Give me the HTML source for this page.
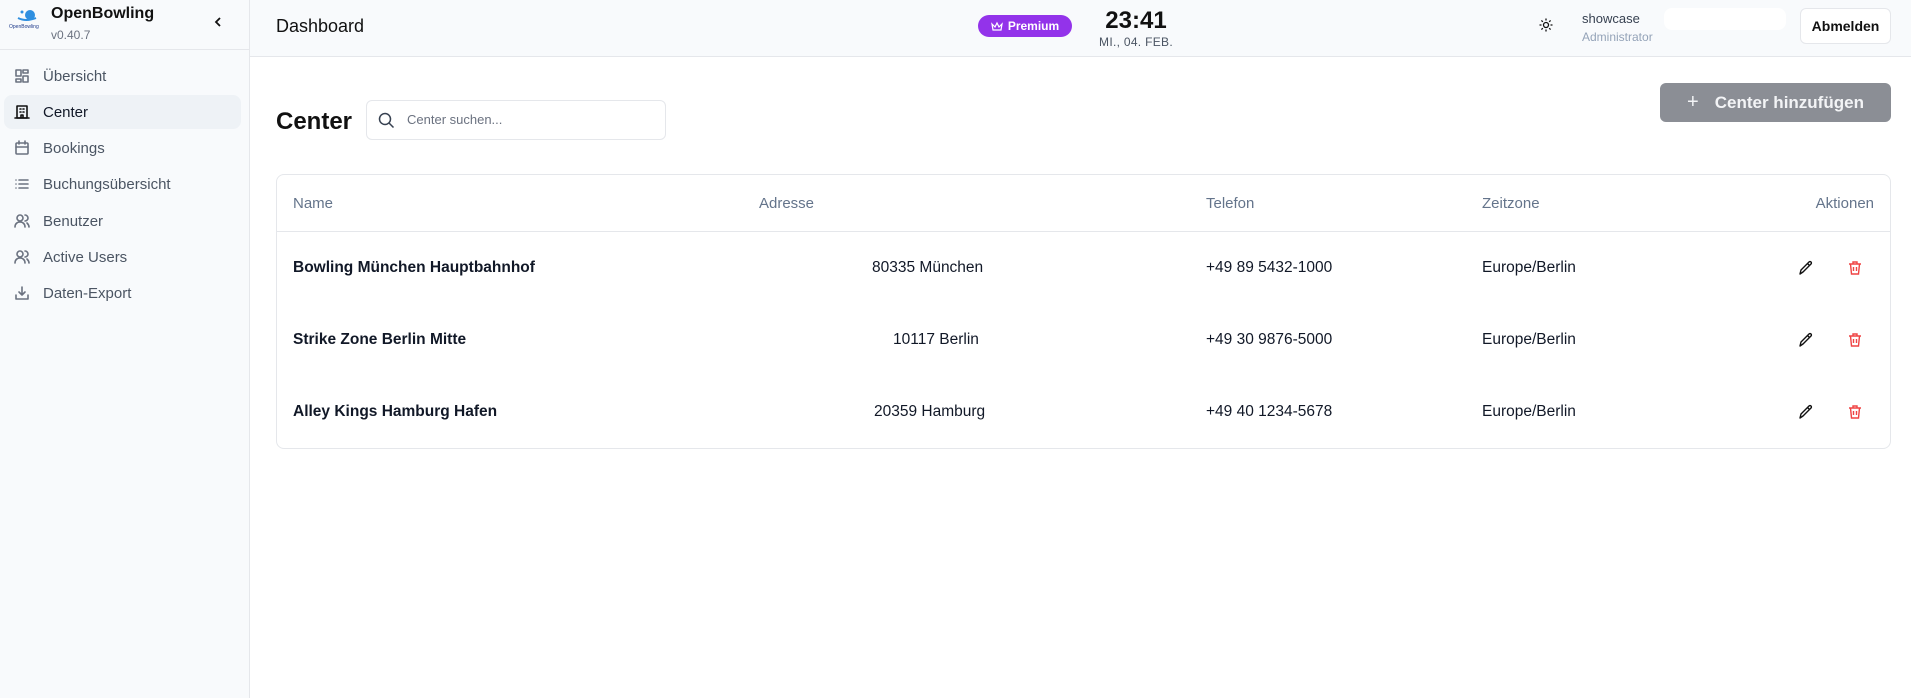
<!DOCTYPE html>
<html><head><meta charset="utf-8"><style>
*{box-sizing:border-box;margin:0;padding:0}
body{width:1911px;height:698px;overflow:hidden;font-family:"Liberation Sans",sans-serif;background:#fff;position:relative;color:#111827}
.sb{position:absolute;left:0;top:0;width:250px;height:698px;background:#f8fafc;border-right:1px solid #e5e7eb}
.abs{position:absolute}
.nav{position:absolute;left:4px;width:237px;height:34px;border-radius:8px;display:flex;align-items:center;font-size:15px;color:#4b5563}
.nav svg{position:absolute;left:10px}
.nav span{position:absolute;left:39px}
.hd{position:absolute;left:250px;top:0;right:0;height:57px;background:#f8fafc;border-bottom:1px solid #e5e7eb}
th,td{text-align:left}
.row{position:absolute;left:277px;width:1613px;font-size:15.5px}
.ic{fill:none;stroke:#6b7280;stroke-width:1.6;stroke-linecap:round;stroke-linejoin:round}
</style></head><body>
<div class="sb">
  <svg class="abs" style="left:8px;top:6px" width="36" height="24" viewBox="0 0 36 24"><circle cx="22" cy="9" r="5" fill="#2f8fe0"/><path d="M10 12 q8 4 18 0" stroke="#2f8fe0" stroke-width="2" fill="none"/><circle cx="14" cy="6" r="1.5" fill="#2f8fe0"/><text x="1" y="22" font-size="5" fill="#1e3a8a" font-family="Liberation Sans">OpenBowling</text></svg>
  <div class="abs" style="left:51px;top:5px;font-size:16px;font-weight:bold;color:#111">OpenBowling</div>
  <div class="abs" style="left:51px;top:28px;font-size:12px;color:#6b7280">v0.40.7</div>
  <svg class="abs" style="left:211px;top:15px" width="14" height="14" viewBox="0 0 14 14"><path d="M9 3 L5 7 L9 11" stroke="#111" stroke-width="1.8" fill="none"/></svg>
  <div class="abs" style="left:0;top:49px;width:250px;border-top:1px solid #e5e7eb"></div>
  <div class="nav" style="top:59px"><svg width="16" height="16" viewBox="0 0 16 16" class="ic"><rect x="2" y="2" width="5" height="6"/><rect x="9" y="2" width="5" height="3"/><rect x="9" y="8" width="5" height="6"/><rect x="2" y="11" width="5" height="3"/></svg><span>Übersicht</span></div>
  <div class="nav" style="top:95px;background:#eef2f6;color:#111827;font-weight:500"><svg width="16" height="16" viewBox="0 0 16 16" class="ic" style="stroke:#111"><rect x="3" y="2" width="10" height="12"/><path d="M1 14h14M6 5h1M9 5h1M6 8h1M9 8h1M7 14v-3h2v3"/></svg><span>Center</span></div>
  <div class="nav" style="top:131px"><svg width="16" height="16" viewBox="0 0 16 16" class="ic"><rect x="2" y="3" width="12" height="11" rx="1"/><path d="M2 7h12M5 1v3M11 1v3"/></svg><span>Bookings</span></div>
  <div class="nav" style="top:167px"><svg width="16" height="16" viewBox="0 0 16 16" class="ic"><path d="M5 4h9M5 8h9M5 12h9M2 4h0M2 8h0M2 12h0"/></svg><span>Buchungsübersicht</span></div>
  <div class="nav" style="top:204px"><svg width="16" height="16" viewBox="0 0 16 16" class="ic"><circle cx="6" cy="5" r="3"/><path d="M1 14c0-3 2-5 5-5s5 2 5 5M11 2a3 3 0 010 6M13 10c1 1 2 2 2 4"/></svg><span>Benutzer</span></div>
  <div class="nav" style="top:240px"><svg width="16" height="16" viewBox="0 0 16 16" class="ic"><circle cx="6" cy="5" r="3"/><path d="M1 14c0-3 2-5 5-5s5 2 5 5M11 2a3 3 0 010 6M13 10c1 1 2 2 2 4"/></svg><span>Active Users</span></div>
  <div class="nav" style="top:276px"><svg width="16" height="16" viewBox="0 0 16 16" class="ic"><path d="M8 2v8M5 7l3 3 3-3M2 10v4h12v-4"/></svg><span>Daten-Export</span></div>
</div>
<div class="hd">
  <div class="abs" style="left:26px;top:16px;font-size:18px;color:#111">Dashboard</div>
  <div class="abs" style="left:728px;top:15px;width:94px;height:22px;border-radius:11px;background:#9333ea;color:#fff;font-size:12px;font-weight:bold;display:flex;align-items:center;justify-content:center;gap:5px"><svg width="12" height="11" viewBox="0 0 12 11"><path d="M1 3l3 3 2-4 2 4 3-3-1 6H2z" stroke="#fff" fill="none" stroke-width="1.2"/></svg>Premium</div>
  <div class="abs" style="left:836px;top:7px;width:100px;text-align:center;font-size:24px;font-weight:bold;color:#111">23:41</div>
  <div class="abs" style="left:836px;top:35px;width:100px;text-align:center;font-size:12px;color:#4b5563;letter-spacing:.3px">MI., 04. FEB.</div>
  <svg class="abs" style="left:1289px;top:18px" width="14" height="14" viewBox="0 0 14 14"><circle cx="7" cy="7" r="2.5" stroke="#111" fill="none" stroke-width="1.3"/><path d="M7 0.5v2M7 11.5v2M0.5 7h2M11.5 7h2M2.4 2.4l1.4 1.4M10.2 10.2l1.4 1.4M2.4 11.6l1.4-1.4M10.2 3.8l1.4-1.4" stroke="#111" stroke-width="1.3"/></svg>
  <div class="abs" style="left:1332px;top:11px;font-size:13px;color:#374151">showcase</div>
  <div class="abs" style="left:1332px;top:30px;font-size:12px;color:#94a3b8">Administrator</div>
  <div class="abs" style="left:1414px;top:8px;width:122px;height:22px;background:#fff;border-radius:8px"></div>
  <div class="abs" style="left:1550px;top:8px;width:91px;height:36px;background:#fff;border:1px solid #e5e7eb;border-radius:6px;font-size:14px;font-weight:bold;color:#111;display:flex;align-items:center;justify-content:center">Abmelden</div>
</div>
<div class="abs" style="left:276px;top:108px;font-size:24px;font-weight:bold;color:#111">Center</div>
<div class="abs" style="left:366px;top:100px;width:300px;height:40px;border:1px solid #e5e7eb;border-radius:6px"><svg class="abs" style="left:11px;top:11px" width="17" height="17" viewBox="0 0 17 17"><circle cx="7" cy="7" r="5.5" stroke="#374151" stroke-width="1.5" fill="none"/><path d="M11 11l4.5 4.5" stroke="#374151" stroke-width="1.5"/></svg><div class="abs" style="left:40px;top:11px;font-size:13px;color:#6b7280">Center suchen...</div></div>
<div class="abs" style="left:1660px;top:83px;width:231px;height:39px;background:#8b8e95;border-radius:6px;color:#f3f4f6;font-size:17px;font-weight:bold;display:flex;align-items:center;justify-content:center;gap:16px"><span style="font-weight:normal;font-size:20px">+</span>Center hinzufügen</div>
<div class="abs" style="left:276px;top:174px;width:1615px;height:275px;border:1px solid #e5e7eb;border-radius:8px"></div>
<div class="abs" style="left:277px;top:231px;width:1613px;border-top:1px solid #e5e7eb"></div>
<div class="row" style="top:195px;color:#64748b;font-size:15px">
  <span class="abs" style="left:16px">Name</span><span class="abs" style="left:482px">Adresse</span><span class="abs" style="left:929px">Telefon</span><span class="abs" style="left:1205px">Zeitzone</span><span class="abs" style="right:16px">Aktionen</span>
</div>
<div class="row" style="top:259px">
  <b class="abs" style="left:16px">Bowling München Hauptbahnhof</b><span class="abs" style="left:595px">80335 München</span><span class="abs" style="left:929px">+49 89 5432-1000</span><span class="abs" style="left:1205px">Europe/Berlin</span>
</div>
<div class="row" style="top:331px">
  <b class="abs" style="left:16px">Strike Zone Berlin Mitte</b><span class="abs" style="left:616px">10117 Berlin</span><span class="abs" style="left:929px">+49 30 9876-5000</span><span class="abs" style="left:1205px">Europe/Berlin</span>
</div>
<div class="row" style="top:403px">
  <b class="abs" style="left:16px">Alley Kings Hamburg Hafen</b><span class="abs" style="left:597px">20359 Hamburg</span><span class="abs" style="left:929px">+49 40 1234-5678</span><span class="abs" style="left:1205px">Europe/Berlin</span>
</div>
<svg class="abs" style="left:0;top:0" width="1911" height="698">
  <defs>
    <g id="ed"><path d="M2 14l1-4 8-8a1.4 1.4 0 012 2l-8 8z M9.5 3.5l2 2" stroke="#111" stroke-width="1.4" fill="none" stroke-linejoin="round"/></g>
    <g id="tr"><path d="M2 4h12M6 4V2h4v2M3.5 4l1 10h7l1-10M6.5 7v4M9.5 7v4" stroke="#ef4444" stroke-width="1.4" fill="none"/></g>
  </defs>
  <use href="#ed" x="1798" y="260"/><use href="#tr" x="1847" y="260"/>
  <use href="#ed" x="1798" y="332"/><use href="#tr" x="1847" y="332"/>
  <use href="#ed" x="1798" y="404"/><use href="#tr" x="1847" y="404"/>
</svg>
</body></html>
